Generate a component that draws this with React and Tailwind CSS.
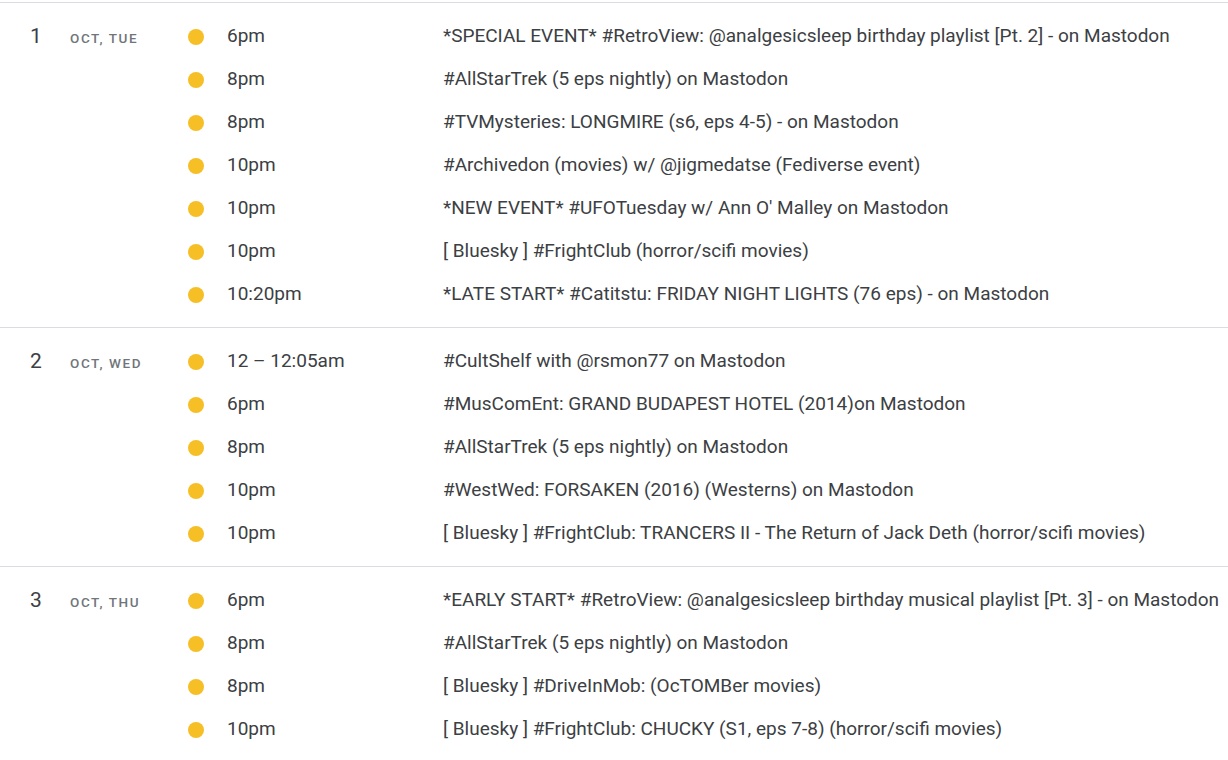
const days = [
  {
    num: "1",
    label: "Oct, Tue",
    events: [
      ["6pm", "*SPECIAL EVENT* #RetroView: @analgesicsleep birthday playlist [Pt. 2] - on Mastodon"],
      ["8pm", "#AllStarTrek (5 eps nightly) on Mastodon"],
      ["8pm", "#TVMysteries: LONGMIRE (s6, eps 4-5) - on Mastodon"],
      ["10pm", "#Archivedon (movies) w/ @jigmedatse (Fediverse event)"],
      ["10pm", "*NEW EVENT* #UFOTuesday w/ Ann O' Malley on Mastodon"],
      ["10pm", "[ Bluesky ] #FrightClub (horror/scifi movies)"],
      ["10:20pm", "*LATE START* #Catitstu: FRIDAY NIGHT LIGHTS (76 eps) - on Mastodon"],
    ],
  },
  {
    num: "2",
    label: "Oct, Wed",
    events: [
      ["12 – 12:05am", "#CultShelf with @rsmon77 on Mastodon"],
      ["6pm", "#MusComEnt: GRAND BUDAPEST HOTEL (2014)on Mastodon"],
      ["8pm", "#AllStarTrek (5 eps nightly) on Mastodon"],
      ["10pm", "#WestWed: FORSAKEN (2016) (Westerns) on Mastodon"],
      ["10pm", "[ Bluesky ] #FrightClub: TRANCERS II - The Return of Jack Deth (horror/scifi movies)"],
    ],
  },
  {
    num: "3",
    label: "Oct, Thu",
    events: [
      ["6pm", "*EARLY START* #RetroView: @analgesicsleep birthday musical playlist [Pt. 3] - on Mastodon"],
      ["8pm", "#AllStarTrek (5 eps nightly) on Mastodon"],
      ["8pm", "[ Bluesky ] #DriveInMob: (OcTOMBer movies)"],
      ["10pm", "[ Bluesky ] #FrightClub: CHUCKY (S1, eps 7-8) (horror/scifi movies)"],
    ],
  },
];

export default function App() {
  return (
    <div className="min-h-screen overflow-hidden bg-white pt-[2px] text-[#3c4043] font-['Roboto',sans-serif]">
      {days.map((day) => (
        <div key={day.num} className="flex border-t border-[#dadce0] pt-3 pb-[11px]">
          <div className="flex h-[43px] w-[188px] shrink-0 items-center pl-[30px]">
            <span className="w-[40px] text-[21px] leading-none">{day.num}</span>
            <span className="mt-[4px] text-[13.5px] font-medium uppercase tracking-[1.6px] text-[#70757a]">
              {day.label}
            </span>
          </div>
          <div className="flex-1">
            {day.events.map(([time, title], i) => (
              <div key={i} className="flex h-[43px] items-center whitespace-nowrap text-[19px]">
                <div className="w-[39px] shrink-0">
                  <div className="h-4 w-4 rounded-full bg-[#f6bf26]" />
                </div>
                <div className="w-[216px] shrink-0">{time}</div>
                <div>{title}</div>
              </div>
            ))}
          </div>
        </div>
      ))}
    </div>
  );
}
